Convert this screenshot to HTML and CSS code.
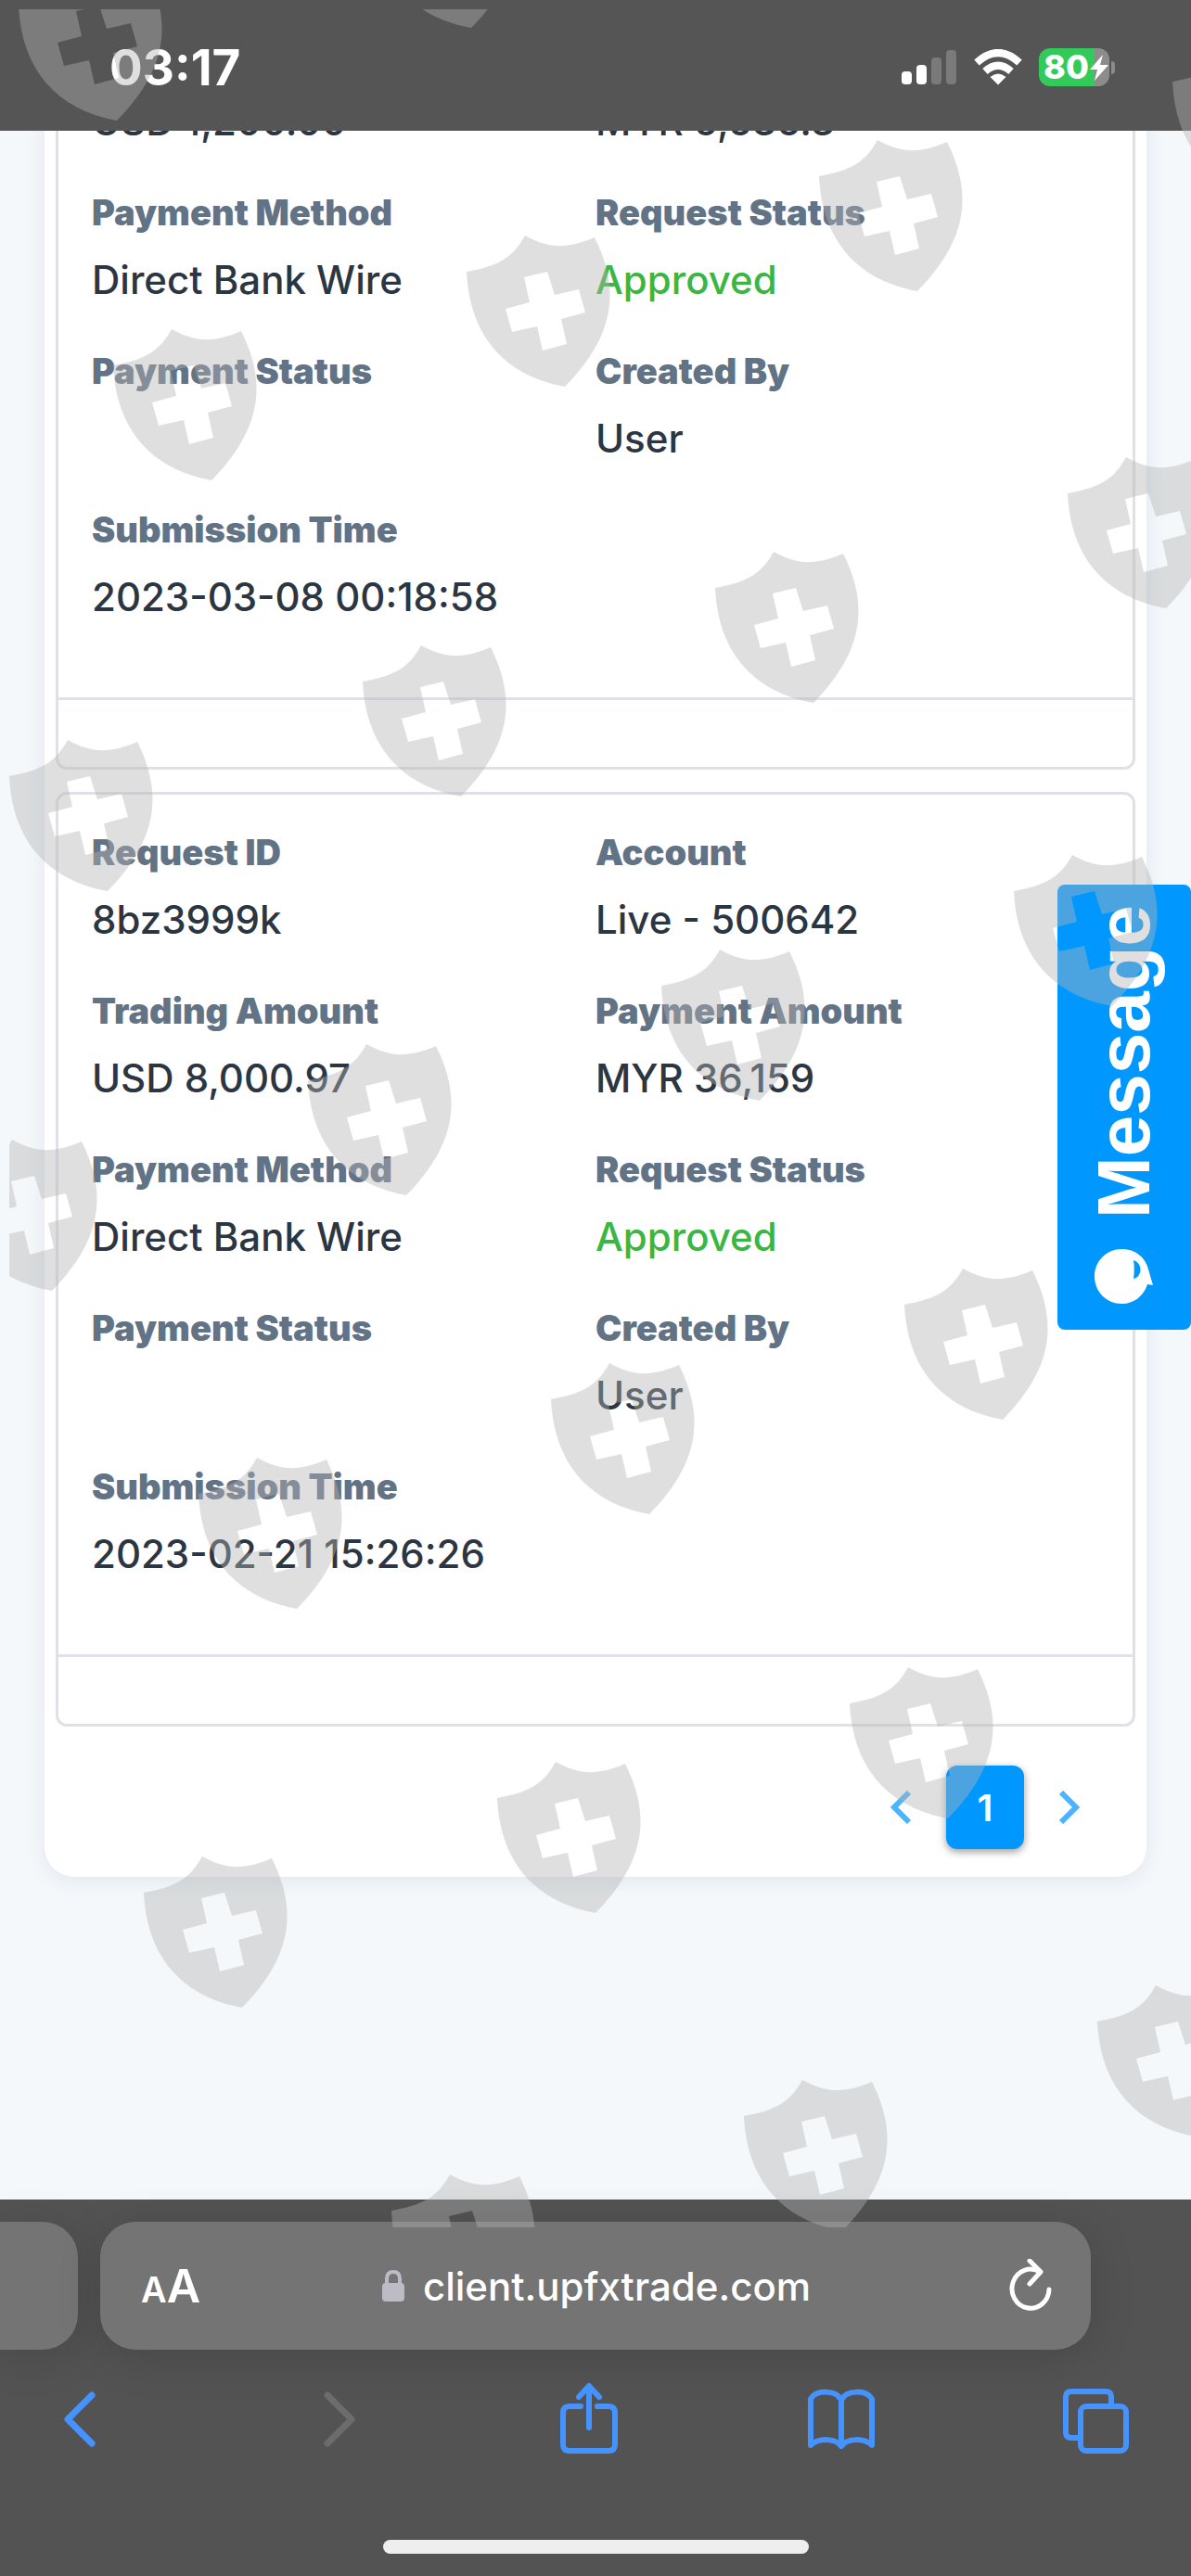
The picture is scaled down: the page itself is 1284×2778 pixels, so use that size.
FILE: index.html
```html
<!DOCTYPE html>
<html lang="en">
<head>
<meta charset="utf-8">
<meta name="viewport" content="width=device-width, initial-scale=1">
<title>Deposit requests</title>
<link rel="stylesheet" href="styles.css">
</head>
<body>
<header class="status">
  <time class="clock">03:17</time>
  <div class="indicators">
    <svg class="signal" width="60" height="40" viewBox="0 0 60 40" fill="#fff" aria-label="Signal"><rect x="0" y="24" width="11" height="14" rx="4"/><rect x="16" y="17" width="11" height="21" rx="4"/><g fill="#7a7a7a"><rect x="32" y="9" width="11" height="29" rx="4"/><rect x="48" y="1" width="11" height="37" rx="4"/></g></svg>
    <svg class="wifi" width="52" height="40" viewBox="0 0 52 40" fill="none" stroke="#fff" stroke-width="8" aria-label="Wi-Fi"><path d="M3 14.500Q26-6.500 49 14.500"/><path d="M12 24Q26 11.500 40 24"/><path d="M17.500 30Q26 23 34.500 30L26 38.500Z" fill="#fff" stroke="none"/></svg>
    <div class="battery"><span class="level">80</span><svg class="bolt" width="20" height="28" viewBox="0 0 20 28" fill="#fff"><path d="M14 0L0 16H8L5 28L20 11H11Z"/></svg></div>
    <span class="nub"></span>
  </div>
</header>

<main class="page">
  <section class="card">
    <article class="request">
      <dl class="fields">
        <div><dd>USD 1,200.00</dd></div>
        <div><dd>MYR 5,535.3</dd></div>
        <div><dt>Payment Method</dt><dd>Direct Bank Wire</dd></div>
        <div><dt>Request Status</dt><dd class="ok">Approved</dd></div>
        <div><dt>Payment Status</dt><dd></dd></div>
        <div><dt>Created By</dt><dd>User</dd></div>
        <div><dt>Submission Time</dt><dd>2023-03-08 00:18:58</dd></div>
      </dl>
      <footer class="actions"></footer>
    </article>
    <article class="request">
      <dl class="fields">
        <div><dt>Request ID</dt><dd>8bz3999k</dd></div>
        <div><dt>Account</dt><dd>Live - 500642</dd></div>
        <div><dt>Trading Amount</dt><dd>USD 8,000.97</dd></div>
        <div><dt>Payment Amount</dt><dd>MYR 36,159</dd></div>
        <div><dt>Payment Method</dt><dd>Direct Bank Wire</dd></div>
        <div><dt>Request Status</dt><dd class="ok">Approved</dd></div>
        <div><dt>Payment Status</dt><dd></dd></div>
        <div><dt>Created By</dt><dd>User</dd></div>
        <div><dt>Submission Time</dt><dd>2023-02-21 15:26:26</dd></div>
      </dl>
      <footer class="actions"></footer>
    </article>
    <nav class="pager" aria-label="Pages">
      <button class="arrow" aria-label="Previous page"><svg width="24" height="36" viewBox="0 0 24 36" fill="none" stroke="#4ab4ff" stroke-width="6"><path d="M21 2L5 18L21 34"/></svg></button>
      <button class="current" aria-current="page">1</button>
      <button class="arrow" aria-label="Next page"><svg width="24" height="36" viewBox="0 0 24 36" fill="none" stroke="#4ab4ff" stroke-width="6"><path d="M3 2L19 18L3 34"/></svg></button>
    </nav>
  </section>
</main>

<button class="message">
  <svg width="64" height="60" viewBox="0 0 64 60" fill="#fff" aria-hidden="true"><path fill-rule="evenodd" d="M29.500 0C44 0 55 9 58 22L63 39L57 38C53 51 42 59 29.500 59C13 59 0 46 0 29.500S13 0 29.500 0ZM42 12C43 18 43 25 42 32C52 30 52 15 42 12Z"/></svg>
  <span>Message</span>
</button>

<footer class="browser">
  <div class="tabs">
    <div class="tab-edge"></div>
    <div class="address">
      <button class="reader" aria-label="Page settings"><small>A</small>A</button>
      <a class="url" href="#"><svg width="24" height="34" viewBox="0 0 24 34" aria-hidden="true"><path d="M5 17V9.500Q5 2 12 2T19 9.500V17" fill="none" stroke="#bdbbc6" stroke-width="4"/><rect y="14" width="24" height="20" rx="4" fill="#bdbbc6"/></svg>client.upfxtrade.com</a>
      <button class="reload" aria-label="Reload"><svg width="46" height="58" viewBox="0 0 46 58" fill="none" stroke="#fff" stroke-width="5" stroke-linecap="round" stroke-linejoin="round"><path d="M43 33A20 21 0 1 1 33 14"/><path d="M22 2L34 14L22 27"/></svg></button>
    </div>
  </div>
  <nav class="tools">
    <button class="step" aria-label="Back"><svg viewBox="0 0 74 80"><path d="M51 14L25 40L51 66"/></svg></button>
    <button class="step" aria-label="Forward" disabled><svg viewBox="0 0 74 80"><path d="M31 14L57 40L31 66"/></svg></button>
    <button aria-label="Share"><svg viewBox="0 0 74 80"><path d="M30 26H18Q11 26 11 33V67Q11 74 18 74H60Q67 74 67 67V33Q67 26 60 26H48"/><path d="M39 49V5M28 16L39 4L50 16"/></svg></button>
    <button aria-label="Bookmarks"><svg viewBox="0 0 74 80"><path d="M37 19C31 8 10 8 4 18V68C12 60 31 60 37 69C43 60 62 60 70 68V18C64 8 43 8 37 19V69"/></svg></button>
    <button aria-label="Tabs"><svg viewBox="0 0 74 80"><path d="M20 60H11Q5 60 5 54V16Q5 10 11 10H48Q54 10 54 16V26"/><rect x="21" y="26" width="49" height="48" rx="6"/></svg></button>
  </nav>
  <div class="home"></div>
</footer>

<svg class="shields" aria-hidden="true">
  <defs>
    <path id="s" fill-rule="evenodd" d="M0 0C34-6 50-15 63-39C88-25 108-24 138-37C165 17 162 67 106 124C40 112 3 68 0 0ZM62 6L68 33L42 40L49 65L76 59L82 85L108 78L102 51L128 44L121 19L95 25L87 0Z"/>
  </defs>
  <use href="#s" x="10" y="-4"/><use href="#s" x="392" y="-104"/>
  <use href="#s" x="1254" y="78"/><use href="#s" x="873" y="180"/><use href="#s" x="493" y="283"/><use href="#s" x="112" y="384"/>
  <use href="#s" x="1141" y="522"/><use href="#s" x="761" y="624"/><use href="#s" x="381" y="725"/><use href="#s" x="0" y="827"/>
  <use href="#s" x="1083" y="951"/><use href="#s" x="703" y="1053"/><use href="#s" x="322" y="1155"/><use href="#s" x="-60" y="1258"/>
  <use href="#s" x="965" y="1397"/><use href="#s" x="584" y="1499"/><use href="#s" x="204" y="1601"/>
  <use href="#s" x="906" y="1827"/><use href="#s" x="526" y="1929"/><use href="#s" x="145" y="2031"/>
  <use href="#s" x="1173" y="2170"/><use href="#s" x="792" y="2272"/><use href="#s" x="412" y="2374"/>
</svg>
</body>
</html>
```
FILE: styles.css
```css
* { box-sizing: border-box; }

body {
  position: relative;
  display: flex;
  flex-direction: column;
  min-height: 100vh;
  margin: 0;
  overflow-x: hidden;
  background: #f4f8fb;
  color: #2c3642;
  font-family: Inter, "Liberation Sans", sans-serif;
}

button {
  padding: 0;
  border: 0;
  background: none;
  color: inherit;
  font: inherit;
}

svg { display: block; }

/* status bar */
.status {
  position: relative;
  z-index: 1;
  display: flex;
  align-items: center;
  justify-content: space-between;
  height: 141px;
  padding: 4px 82px 0 118px;
  background: #555;
  color: #fff;
}

.clock { font-size: 53px; font-weight: 700; }

.indicators { display: flex; align-items: center; }
.signal { margin-right: 18px; }
.wifi { margin-right: 18px; }

.battery {
  display: flex;
  align-items: center;
  width: 76px;
  height: 41px;
  padding-left: 5px;
  border-radius: 12px;
  background: linear-gradient(to right, #32cb5a 60px, #8c8c8c 60px);
}

.level { font-size: 36px; font-weight: 800; line-height: 41px; }
.bolt { margin-left: 1px; }

.nub {
  width: 4px;
  height: 14px;
  margin-left: 2px;
  border-radius: 0 4px 4px 0;
  background: #8c8c8c;
}

/* request list, scrolled partly under the status bar */
.page { flex: 1; padding: 0 48px; }

.card {
  margin-top: -81px;
  padding: 0 12px 30px;
  border-radius: 32px;
  background: #fff;
  box-shadow: 0 4px 20px rgba(90, 110, 130, .12);
}

.request {
  margin-bottom: 24px;
  border: 3px solid #e0e0e8;
  border-radius: 12px;
}

.fields {
  display: grid;
  grid-template-columns: 1fr 1fr;
  row-gap: 44px;
  margin: 0;
  padding: 38px 36px 78px;
}

dt {
  margin-bottom: 19px;
  color: #627386;
  font-size: 38px;
  font-weight: 900;
  line-height: 48px;
}

dd {
  height: 60px;
  margin: 0;
  font-size: 42px;
  font-weight: 500;
  line-height: 60px;
}

.ok { color: #3cb643; }

.actions { height: 75px; border-top: 3px solid #e0e0e8; }

.pager {
  display: flex;
  align-items: center;
  justify-content: flex-end;
  gap: 37px;
  padding: 18px 59px 0 0;
}

.current {
  width: 84px;
  height: 90px;
  border-radius: 12px;
  background: #0098ff;
  box-shadow: 0 3px 8px rgba(0, 0, 0, .4);
  color: #fff;
  font-size: 40px;
  font-weight: 600;
}

/* chat launcher pinned to the window edge */
.message {
  position: absolute;
  top: 954px;
  right: 0;
  display: flex;
  flex-direction: column-reverse;
  align-items: center;
  justify-content: space-between;
  width: 144px;
  height: 480px;
  padding: 22px 0 27px;
  border-radius: 8px;
  background: #0098ff;
  color: #fff;
}

.message span {
  font: 700 80px/92px "Liberation Sans", sans-serif;
  writing-mode: vertical-rl;
  transform: rotate(180deg);
}

/* browser bar */
.browser {
  height: 406px;
  padding-top: 24px;
  background: #535353;
  color: #fff;
}

.tabs { display: flex; gap: 24px; padding-right: 108px; }

.tab-edge, .address {
  height: 138px;
  background: #747474;
  box-shadow: 0 8px 50px rgba(0, 0, 0, .14);
}

.tab-edge { width: 84px; border-radius: 0 38px 38px 0; }

.address {
  flex: 1;
  display: flex;
  align-items: center;
  justify-content: space-between;
  padding: 0 42px 0 44px;
  border-radius: 38px;
}

.reader { font-size: 50px; font-weight: 600; }
.reader small { font-size: 38px; }

.reload {
  display: flex;
  justify-content: flex-end;
  width: 64px;
}

.url {
  display: flex;
  align-items: center;
  gap: 20px;
  color: #fff;
  font-size: 42px;
  font-weight: 500;
  text-decoration: none;
}

.tools {
  display: flex;
  justify-content: space-between;
  padding: 35px 66px 0 48px;
}

.tools svg {
  width: 74px;
  height: 80px;
  fill: none;
  stroke: #4593ff;
  stroke-width: 6;
  stroke-linecap: round;
  stroke-linejoin: round;
}

.tools .step svg { stroke-width: 7; }
.tools button:disabled svg { stroke: #6c6c6c; }

.home {
  width: 459px;
  height: 15px;
  margin: 90px auto 0;
  border-radius: 8px;
  background: #eee;
}

/* shield watermark across the whole screen */
.shields {
  position: absolute;
  z-index: 2;
  top: 10px;
  left: 10px;
  width: calc(100% - 10px);
  height: 2392px;
  overflow: hidden;
  fill: rgba(178, 178, 178, .42);
  pointer-events: none;
}
```
